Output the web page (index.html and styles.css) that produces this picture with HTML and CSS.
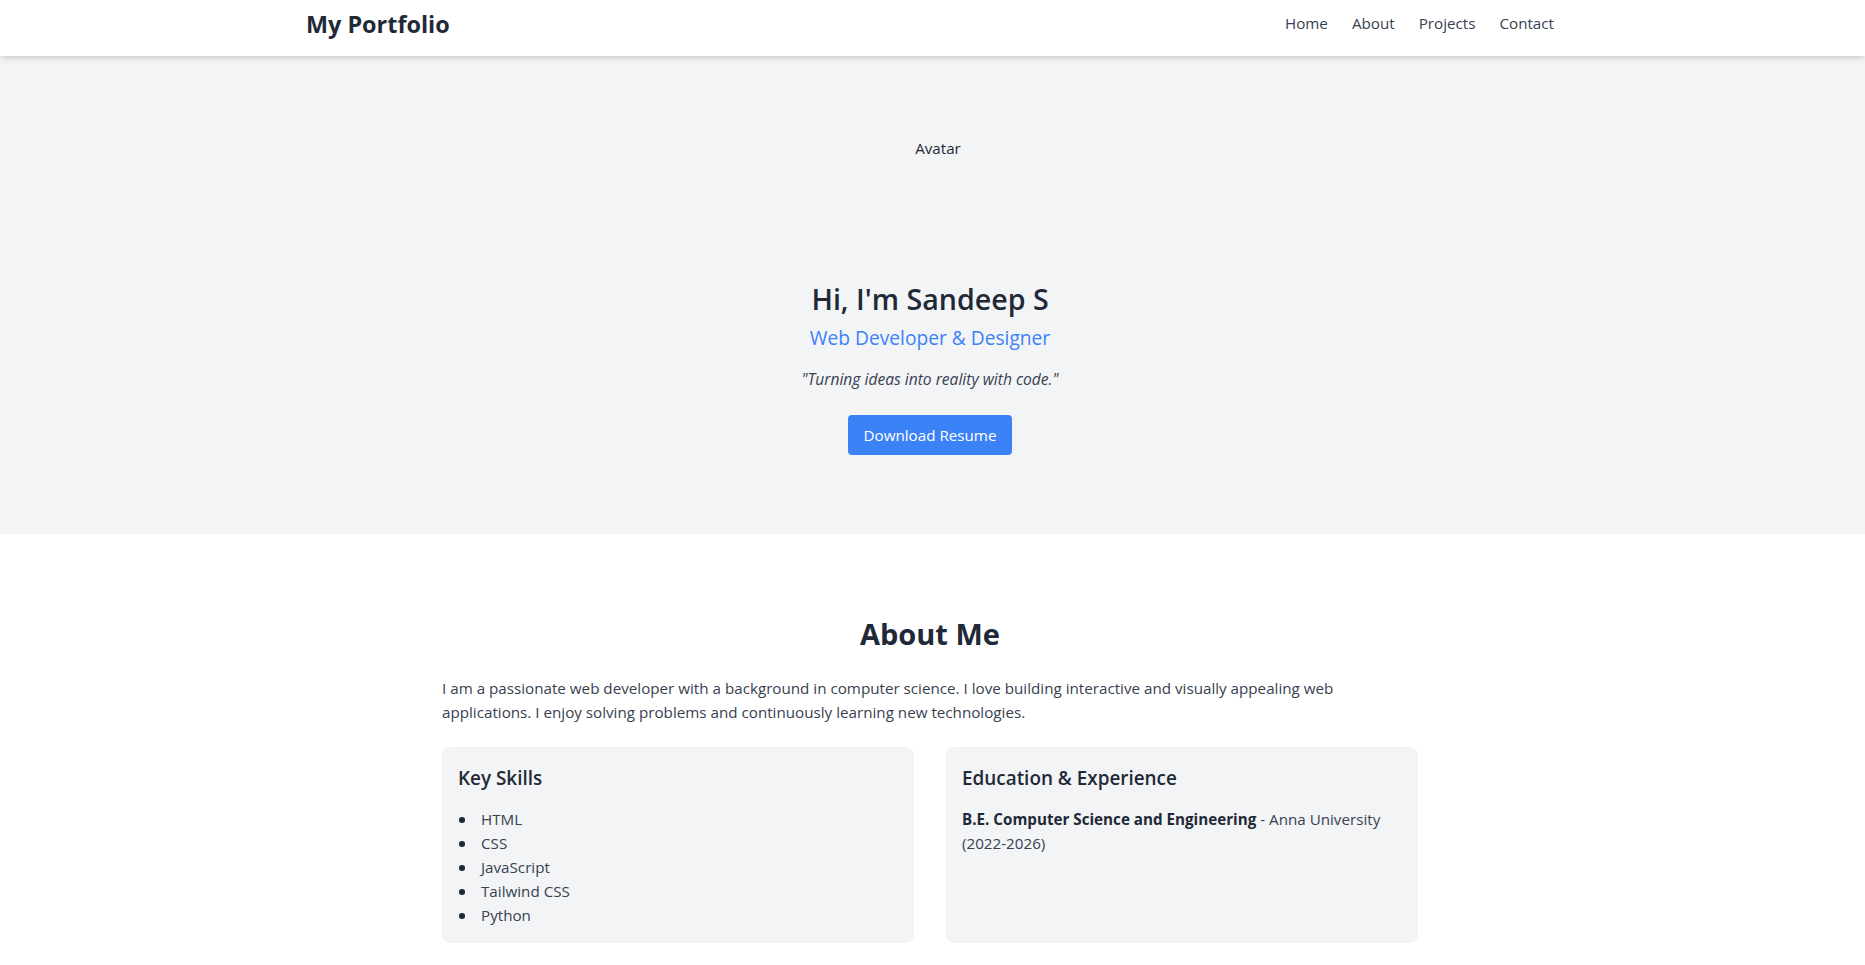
FILE: index.html
```html
<!DOCTYPE html>
<html lang="en">
<head>
<meta charset="utf-8">
<title>My Portfolio</title>
<link rel="stylesheet" href="styles.css">
</head>
<body>
<header class="site-header">
  <div class="header-inner">
    <a class="logo" href="#">My Portfolio</a>
    <nav class="nav">
      <a href="#home">Home</a>
      <a href="#about">About</a>
      <a href="#projects">Projects</a>
      <a href="#contact">Contact</a>
    </nav>
  </div>
</header>

<section class="hero" id="home">
  <div class="avatar">Avatar</div>
  <h1 class="hero-title">Hi, I'm Sandeep S</h1>
  <h2 class="hero-subtitle">Web Developer &amp; Designer</h2>
  <p class="hero-quote">"Turning ideas into reality with code."</p>
  <a class="btn" href="#">Download Resume</a>
</section>

<section class="about" id="about">
  <div class="about-inner">
    <h2 class="section-title">About Me</h2>
    <p class="about-text">I am a passionate web developer with a background in computer science. I love building interactive and visually appealing web applications. I enjoy solving problems and continuously learning new technologies.</p>
    <div class="cards">
      <div class="card">
        <h3 class="card-title">Key Skills</h3>
        <ul class="skills">
          <li>HTML</li>
          <li>CSS</li>
          <li>JavaScript</li>
          <li>Tailwind CSS</li>
          <li>Python</li>
        </ul>
      </div>
      <div class="card">
        <h3 class="card-title">Education &amp; Experience</h3>
        <p class="card-text"><strong>B.E. Computer Science and Engineering</strong> - Anna University (2022-2026)</p>
      </div>
    </div>
  </div>
</section>
</body>
</html>
```

FILE: styles.css
```css
* {
  box-sizing: border-box;
}

html, body {
  margin: 0;
  padding: 0;
}

body {
  font-family: "Open Sans", "Noto Sans", Arial, sans-serif;
  font-size: 15.2px;
  line-height: 24px;
  color: #1f2937;
  background: #ffffff;
}

a {
  text-decoration: none;
  color: inherit;
}

h1, h2, h3, p, ul {
  margin: 0;
  padding: 0;
}

/* Header */
.site-header {
  position: relative;
  z-index: 10;
  background: #ffffff;
  padding-right: 5px;
  box-shadow: 0 4px 6px -1px rgba(0, 0, 0, 0.1), 0 2px 4px -2px rgba(0, 0, 0, 0.1);
}

.header-inner {
  max-width: 1280px;
  margin: 0 auto;
  padding: 8px 16px 16px;
  display: flex;
  align-items: center;
  justify-content: space-between;
}

.logo {
  font-size: 23.4px;
  line-height: 32px;
  font-weight: 700;
  color: #1f2937;
}

.nav {
  display: flex;
  gap: 24px;
  font-size: 15.2px;
  line-height: 24px;
  margin-bottom: 2px;
}

.nav a {
  color: #374151;
}

/* Hero */
.hero {
  background: #f3f4f6;
  padding: 80px 21px 79px 16px;
  display: flex;
  flex-direction: column;
  align-items: center;
  text-align: center;
}

.avatar {
  width: 128px;
  height: 128px;
  border-radius: 50%;
  padding-left: 16px;
  margin-bottom: 17px;
  font-size: 15.2px;
  line-height: 24px;
  color: #1f2937;
  text-align: center;
}

.hero-title {
  font-size: 28.6px;
  line-height: 36px;
  font-weight: 600;
  color: #1f2937;
  margin-bottom: 7px;
}

.hero-subtitle {
  font-size: 19.2px;
  line-height: 28px;
  font-weight: 400;
  color: #3b82f6;
  margin-bottom: 15px;
}

.hero-quote {
  font-size: 15.6px;
  line-height: 24px;
  font-style: italic;
  color: #374151;
  margin-bottom: 24px;
}

.btn {
  display: inline-block;
  background: #3b82f6;
  color: #ffffff;
  font-size: 15.2px;
  line-height: 24px;
  padding: 8px 16px;
  border-radius: 4px;
}

/* About */
.about {
  padding: 82px 5px 80px 0;
  background: #ffffff;
}

.about-inner {
  max-width: 1024px;
  margin: 0 auto;
  padding: 0 24px;
}

.section-title {
  text-align: center;
  font-size: 29px;
  line-height: 36px;
  font-weight: 700;
  color: #1f2937;
  margin-bottom: 24px;
}

.about-text {
  font-size: 15.2px;
  line-height: 24px;
  color: #374151;
  margin-bottom: 23px;
}

.cards {
  display: grid;
  grid-template-columns: 1fr 1fr;
  gap: 32px;
}

.card {
  background: #f3f4f6;
  border-radius: 8px;
  padding: 17px 16px 16px;
}

.card-title {
  font-size: 18.9px;
  line-height: 28px;
  font-weight: 600;
  color: #1f2937;
  margin-bottom: 15px;
}

.skills {
  list-style: none;
  color: #374151;
}

.skills li {
  display: flex;
  align-items: center;
  font-size: 15.2px;
  line-height: 24px;
}

.skills li::before {
  content: "";
  width: 5.5px;
  height: 5.5px;
  border-radius: 50%;
  background: #1f2937;
  margin-left: 1px;
  margin-right: 16.5px;
  flex: none;
  position: relative;
  top: 1px;
}

.card-text {
  font-size: 15.2px;
  line-height: 24px;
  color: #374151;
}

.card-text strong {
  font-weight: 700;
  color: #1f2937;
}
```
